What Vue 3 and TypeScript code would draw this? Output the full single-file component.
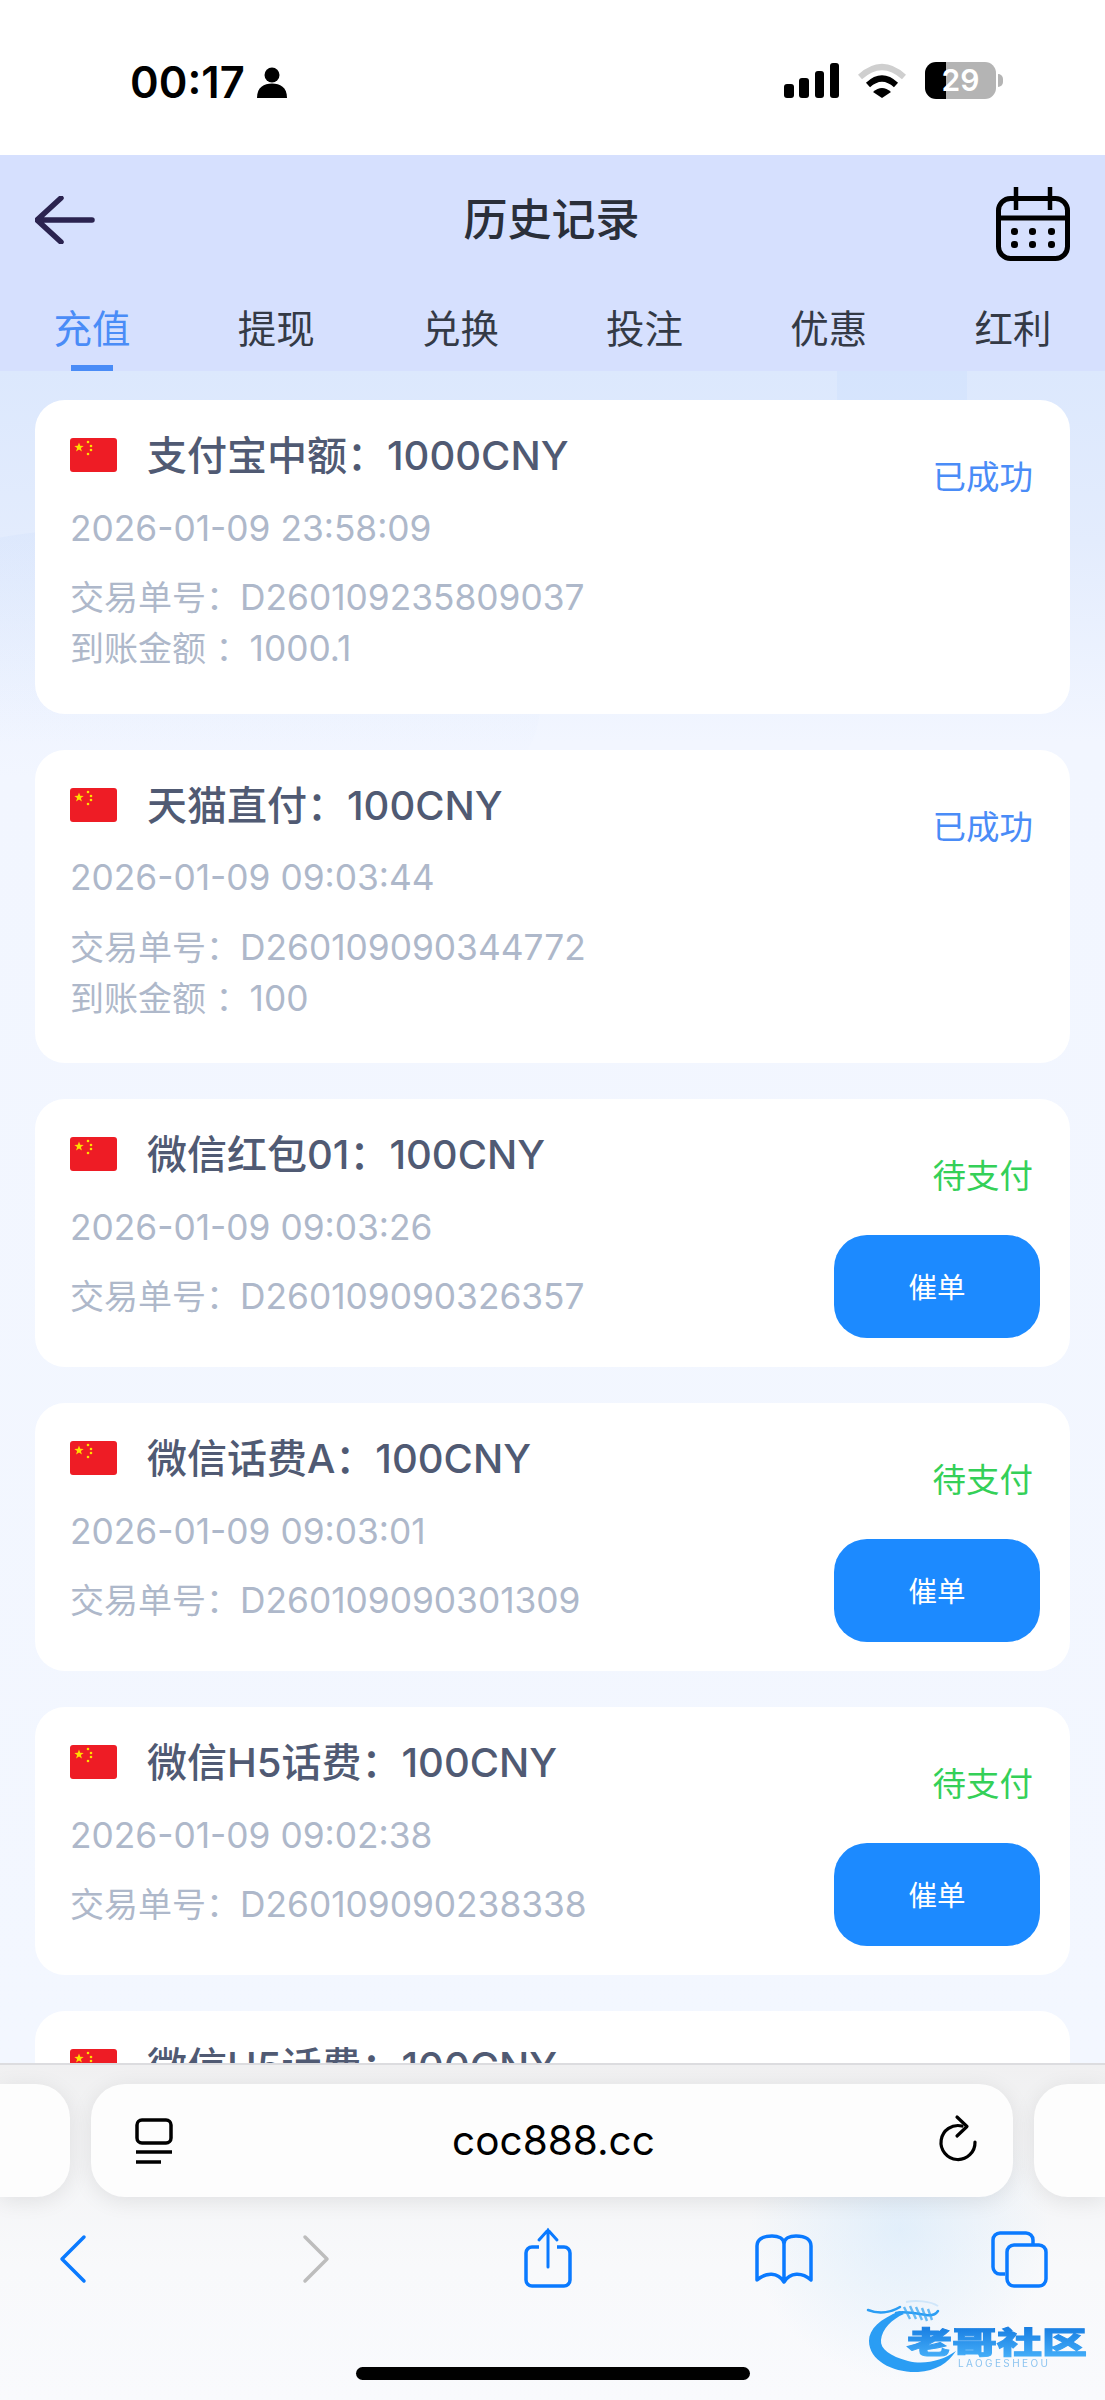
<script setup lang="ts">
interface RecordItem {
  name: string
  time: string
  orderNo: string
  amount?: string
  status: 'success' | 'pending'
}

const tabs = ['充值', '提现', '兑换', '投注', '优惠', '红利']

const records: RecordItem[] = [
  { name: '支付宝中额：1000CNY', time: '2026-01-09 23:58:09', orderNo: 'D260109235809037', amount: '1000.1', status: 'success' },
  { name: '天猫直付：100CNY', time: '2026-01-09 09:03:44', orderNo: 'D260109090344772', amount: '100', status: 'success' },
  { name: '微信红包01：100CNY', time: '2026-01-09 09:03:26', orderNo: 'D260109090326357', status: 'pending' },
  { name: '微信话费A：100CNY', time: '2026-01-09 09:03:01', orderNo: 'D260109090301309', status: 'pending' },
  { name: '微信H5话费：100CNY', time: '2026-01-09 09:02:38', orderNo: 'D260109090238338', status: 'pending' },
  { name: '微信H5话费：100CNY', time: '2026-01-09 09:02:11', orderNo: 'D260109090211204', status: 'pending' }
]
</script>

<template>
  <div class="page">
    <div class="status-bar">
      <div class="status-left">
        <span class="clock">00:17</span>
        <svg class="person" viewBox="0 0 30 31" width="30" height="31">
          <circle cx="15" cy="8" r="7.5" fill="#000" />
          <path fill="#000" d="M0 31C0 20 7 16.5 15 16.5S30 20 30 31Z" />
        </svg>
      </div>
      <div class="status-right">
        <svg viewBox="0 0 55 35" width="55" height="35">
          <rect x="0" y="21" width="10" height="14" rx="3" fill="#000" />
          <rect x="15" y="15" width="10" height="20" rx="3" fill="#000" />
          <rect x="31" y="8" width="9" height="27" rx="3" fill="#000" />
          <rect x="46" y="0" width="9" height="35" rx="3" fill="#000" />
        </svg>
        <svg viewBox="0 0 48 35" width="48" height="35">
          <path d="M2 14Q24 -6 46 14" fill="none" stroke="#cfcfcf" stroke-width="6" />
          <path d="M10 22Q24 9 38 22" fill="none" stroke="#000" stroke-width="6" />
          <path d="M15 29Q24 21 33 29L24 35Z" fill="#000" />
        </svg>
        <div class="battery">29</div>
      </div>
    </div>

    <header class="header">
      <div class="title-row">
        <svg class="back" viewBox="0 0 60 48" width="60" height="48">
          <path d="M26 2L2 24L26 46M3 24H57" fill="none" stroke="#2b2350" stroke-width="5.5" stroke-linecap="round" stroke-linejoin="round" />
        </svg>
        <h1 class="title">历史记录</h1>
        <svg class="calendar" viewBox="0 0 74 74" width="74" height="74">
          <rect x="2.5" y="11.5" width="69" height="60" rx="12" fill="none" stroke="#000" stroke-width="5" />
          <path d="M2 31H72" stroke="#000" stroke-width="5" />
          <path d="M20 0V23M54 0V23" stroke="#000" stroke-width="4.5" />
          <g fill="#000">
            <rect x="15" y="41" width="7" height="7" rx="3" />
            <rect x="33" y="41" width="7" height="7" rx="3" />
            <rect x="52" y="41" width="7" height="7" rx="3" />
            <rect x="15" y="54" width="7" height="7" rx="3" />
            <rect x="33" y="54" width="7" height="7" rx="3" />
            <rect x="52" y="54" width="7" height="7" rx="3" />
          </g>
        </svg>
      </div>
      <nav class="tabs">
        <div v-for="(tab, i) in tabs" :key="tab" class="tab" :class="{ active: i === 0 }">{{ tab }}</div>
      </nav>
    </header>

    <main class="list">
      <article v-for="(item, i) in records" :key="i" class="card">
        <div class="card-main">
          <div class="card-head">
            <svg class="flag" viewBox="0 0 47 34" width="47" height="34">
              <rect width="47" height="34" rx="3" fill="#ee1c25" />
              <path fill="#ffde00" d="M9 4.5l1.2 3.3 3.5.1-2.8 2.1 1 3.4-2.9-2-2.9 2 1-3.4-2.8-2.1 3.5-.1z" />
              <circle cx="18" cy="4" r="1.3" fill="#ffde00" />
              <circle cx="21" cy="8" r="1.3" fill="#ffde00" />
              <circle cx="21" cy="12" r="1.3" fill="#ffde00" />
              <circle cx="18" cy="16" r="1.3" fill="#ffde00" />
            </svg>
            <span class="name">{{ item.name }}</span>
          </div>
          <div class="time">{{ item.time }}</div>
          <div class="info first">交易单号：<span class="num">{{ item.orderNo }}</span></div>
          <div v-if="item.amount" class="info">到账金额 ：<span class="num">{{ item.amount }}</span></div>
        </div>
        <div class="card-side">
          <span class="state" :class="item.status">{{ item.status === 'success' ? '已成功' : '待支付' }}</span>
          <button v-if="item.status === 'pending'" class="urge" type="button">催单</button>
        </div>
      </article>
    </main>

    <footer class="browser">
      <div class="pills">
        <div class="pill side-left"></div>
        <div class="pill address">
          <svg viewBox="0 0 38 46" width="38" height="46">
            <rect x="2" y="2" width="34" height="23" rx="5" fill="none" stroke="#000" stroke-width="3.5" />
            <path d="M1 34H37" stroke="#000" stroke-width="3.5" />
            <path d="M1 44H26" stroke="#000" stroke-width="3.5" />
          </svg>
          <span class="url">coc888.cc</span>
          <svg class="reload" viewBox="0 0 38 46" width="38" height="46">
            <path d="M35 24A17 17 0 1 1 22 8" fill="none" stroke="#000" stroke-width="3.2" stroke-linecap="round" />
            <path d="M17 -1L27 8.5L17 18" fill="none" stroke="#000" stroke-width="3.2" stroke-linecap="round" stroke-linejoin="round" />
          </svg>
        </div>
        <div class="pill side-right"></div>
      </div>
      <div class="toolbar">
        <svg viewBox="0 0 60 60" width="60" height="60">
          <path d="M42 8L20 30L42 52" fill="none" stroke="#0a7aff" stroke-width="3.5" stroke-linecap="round" stroke-linejoin="round" transform="translate(0 -1)" />
        </svg>
        <svg viewBox="0 0 60 60" width="60" height="60">
          <path d="M20 8L42 30L20 52" fill="none" stroke="#bdbdbd" stroke-width="3.5" stroke-linecap="round" stroke-linejoin="round" transform="translate(0 -1)" />
        </svg>
        <svg viewBox="0 0 60 60" width="60" height="60">
          <path d="M21 17H14a6 6 0 0 0-6 6v27a6 6 0 0 0 6 6h32a6 6 0 0 0 6-6V23a6 6 0 0 0-6-6h-7" fill="none" stroke="#0a7aff" stroke-width="3.5" />
          <path d="M30 37V0M21 10L30 0L39 10" fill="none" stroke="#0a7aff" stroke-width="3" stroke-linecap="round" />
        </svg>
        <svg viewBox="0 0 60 60" width="60" height="60">
          <path d="M30 14C30 8 24 6 18 6C8 6 3 10 3 16V50C12 42 24 42 30 52C36 42 48 42 57 50V16C57 10 52 6 42 6C36 6 30 8 30 14V52" fill="none" stroke="#0a7aff" stroke-width="3.5" stroke-linejoin="round" />
        </svg>
        <svg viewBox="0 0 60 60" width="60" height="60">
          <rect x="18" y="15" width="39" height="41" rx="7" fill="none" stroke="#0a7aff" stroke-width="3.5" />
          <path d="M16 44H11a7 7 0 0 1-7-7V10a7 7 0 0 1 7-7H37a7 7 0 0 1 7 7V14" fill="none" stroke="#0a7aff" stroke-width="3.5" />
        </svg>
      </div>
      <div class="home-bar"></div>
      <svg class="watermark" viewBox="0 0 226 78" width="226" height="78">
        <defs>
          <linearGradient id="wm" x1="0" y1="0" x2="0" y2="1">
            <stop offset="0" stop-color="#1479e0" />
            <stop offset="1" stop-color="#48b2fa" />
          </linearGradient>
        </defs>
        <path fill="#2a9df4" d="M34 12C14 20 3 30 3 42C3 62 28 74 52 73C70 72 82 64 90 52C76 62 58 66 42 62C24 57 14 50 15 41C16 30 26 20 38 15Z" />
        <path d="M2 11C12 15 24 14 34 8M30 14C38 12 48 14 60 16C66 17 70 15 72 12" fill="none" stroke="#2a9df4" stroke-width="2.5" stroke-linecap="round" />
        <path d="M38 8L44 20M44 7L50 20M50 8L56 21M56 9L61 22M62 10L66 21" fill="none" stroke="#3aa5f2" stroke-width="2.4" opacity="0.75" />
        <path d="M40 3C50 1 64 2 72 7" fill="none" stroke="#cfe6fa" stroke-width="2" />
        <text x="41" y="54" transform="translate(41 0) scale(1.5 1) translate(-41 0)" class="wm-text" fill="url(#wm)" stroke="url(#wm)" stroke-width="1">老哥社区</text>
        <text x="92" y="68" class="wm-sub">LAOGESHEOU</text>
      </svg>
    </footer>
  </div>
</template>

<style>
html,
body {
  margin: 0;
  padding: 0;
  background: #fff;
}
</style>

<style scoped>
.page {
  position: relative;
  display: flex;
  flex-direction: column;
  width: 1105px;
  height: 2400px;
  overflow: hidden;
  font-family: "Inter", "Noto Sans CJK SC", sans-serif;
  background: #fff;
}

.status-bar {
  display: flex;
  justify-content: space-between;
  flex: none;
  height: 155px;
  padding: 62px 109px 0 130px;
  box-sizing: border-box;
  background: #fff;
}

.status-left {
  display: flex;
  align-items: flex-start;
  gap: 12px;
}

.clock {
  font-size: 43.5px;
  line-height: 40px;
  font-weight: 600;
  color: #000;
}

.person {
  margin-top: 5px;
}

.status-right {
  display: flex;
  align-items: flex-start;
  gap: 19px;
  height: 37px;
}

.status-right svg {
  margin-top: 1px;
}

.battery {
  position: relative;
  width: 71px;
  height: 37px;
  border-radius: 11px;
  background: linear-gradient(90deg, #000 30%, #b4b4b4 30%);
  color: #fff;
  font-size: 30px;
  line-height: 37px;
  font-weight: 600;
  text-align: center;
}

.battery::after {
  content: "";
  position: absolute;
  right: -7px;
  top: 12px;
  width: 5px;
  height: 13px;
  border-radius: 0 5px 5px 0;
  background: #b4b4b4;
}

.header {
  flex: none;
  background: #d6e0fe;
}

.title-row {
  display: grid;
  grid-template-columns: 1fr auto 1fr;
  align-items: center;
  height: 130px;
  padding: 0 35px;
}

.calendar {
  justify-self: end;
  margin-top: 8px;
}

.title {
  margin: 0 2px 0 0;
  font-size: 44px;
  line-height: 60px;
  font-weight: 500;
  color: #2a2f3a;
}

.tabs {
  display: flex;
  height: 86px;
}

.tab {
  position: relative;
  flex: 1;
  font-size: 38.5px;
  line-height: 88px;
  text-align: center;
  color: #343a46;
}

.tab.active {
  color: #4a8cf7;
}

.tab.active::after {
  content: "";
  position: absolute;
  left: 50%;
  bottom: 0;
  width: 42px;
  height: 6px;
  margin-left: -21px;
  background: #4a8cf7;
}

.list {
  position: relative;
  flex: 1;
  display: flex;
  flex-direction: column;
  gap: 36px;
  min-height: 0;
  overflow: hidden;
  padding: 29px 35px 0;
  background: linear-gradient(180deg, #dce8fd 0, #e3ecfd 170px, #f2f6ff 370px, #f3f7ff 100%);
}

/* faint shapes of the page background */
.list::before {
  content: "";
  position: absolute;
  left: -260px;
  top: 155px;
  width: 800px;
  height: 360px;
  border-radius: 50%;
  background: linear-gradient(180deg, rgba(190, 212, 250, 0.16), rgba(190, 212, 250, 0) 70%);
}

.list::after {
  content: "";
  position: absolute;
  left: 837px;
  top: 0;
  width: 130px;
  height: 29px;
  background: rgba(190, 215, 255, 0.22);
}

.card {
  position: relative;
  z-index: 1;
  display: flex;
  flex: none;
  justify-content: space-between;
  min-height: 268px;
  padding: 30px 30px 0 35px;
  box-sizing: border-box;
  border-radius: 30px;
  background: #fff;
}

.card-main {
  padding-bottom: 39.5px;
}

.card-head {
  display: flex;
  align-items: center;
  gap: 30px;
  height: 50px;
}

.name {
  padding-top: 2px;
  font-size: 40px;
  line-height: 48px;
  font-weight: 500;
  color: #505a73;
}

.time {
  margin-top: 23.5px;
  font-size: 35.3px;
  line-height: 50px;
  color: #aeb8ca;
}

.info {
  font-size: 34px;
  line-height: 51px;
  color: #aeb8ca;
}

.info.first {
  margin-top: 18.5px;
}

.num {
  font-size: 35.3px;
}

.card-side {
  display: flex;
  flex-direction: column;
  align-items: flex-end;
}

.state {
  margin: 22px 7px 0 0;
  font-size: 33.5px;
  line-height: 50px;
}

.state.success {
  color: #4a8cf7;
}

.state.pending {
  color: #34d058;
}

.urge {
  width: 206px;
  height: 103px;
  margin-top: 34px;
  padding: 0 0 2px;
  border: none;
  border-radius: 33px;
  background: #1c8aff;
  color: #fff;
  font-family: inherit;
  font-size: 28.5px;
}

.browser {
  position: relative;
  z-index: 2;
  flex: none;
  height: 337px;
  box-sizing: border-box;
  border-top: 2px solid #dcdcdf;
  background:
    radial-gradient(circle at 900px 165px, rgba(205, 230, 252, 0.5), rgba(205, 230, 252, 0) 150px),
    linear-gradient(180deg, #f0f0f1 0, #f8f9fb 60%, #f9fafd 100%);
}

.pills {
  display: grid;
  grid-template-columns: 70px 922px 1fr;
  column-gap: 21px;
  margin-top: 19px;
  height: 113px;
}

.pill {
  background: #fdfdfd;
  box-shadow: 0 4px 22px rgba(0, 0, 0, 0.09);
}

.side-left {
  border-radius: 0 34px 34px 0;
}

.side-right {
  border-radius: 34px 0 0 34px;
}

.address {
  display: flex;
  align-items: center;
  justify-content: space-between;
  padding: 0 35px 0 44px;
  border-radius: 34px;
}

.url {
  margin-right: 6px;
  font-size: 40.5px;
  color: #000;
}

.reload {
  overflow: visible;
}

.toolbar {
  display: grid;
  grid-template-columns: 243px 233px 236px 235px 60px;
  margin-top: 33px;
  padding-left: 42px;
}

.toolbar svg {
  overflow: visible;
}

.home-bar {
  position: absolute;
  left: 356px;
  bottom: 20px;
  width: 394px;
  height: 13px;
  border-radius: 7px;
  background: #000;
}

.watermark {
  position: absolute;
  left: 866px;
  bottom: 23px;
  overflow: visible;
  filter: blur(0.6px);
}

.wm-text {
  font-size: 30px;
  font-weight: 900;
}

.wm-sub {
  font-size: 10px;
  letter-spacing: 2.4px;
  fill: #8cc4f0;
}
</style>
